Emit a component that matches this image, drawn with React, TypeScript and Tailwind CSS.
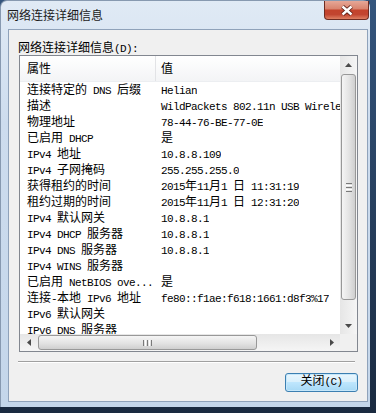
import React from "react";

const CJK_RE = /([\u3000-\u303f\u4e00-\u9fff\uff00-\uffef]+)/;

// SimSun-like mix: CJK glyphs 12px wide, latin half-width 6px
const Txt = ({ text }: { text: string }) => {
  const parts = text.split(CJK_RE);
  return (
    <>
      {parts.map((p, i) =>
        i % 2 === 1 ? (
          <span key={i} className="text-[12px]">
            {p}
          </span>
        ) : p ? (
          <span key={i} className="text-[11px] tracking-[-0.6px]">
            {p}
          </span>
        ) : null
      )}
    </>
  );
};

const rows: [string, string][] = [
  ["连接特定的 DNS 后缀", "Helian"],
  ["描述", "WildPackets 802.11n USB Wireless LAN Card"],
  ["物理地址", "78-44-76-BE-77-0E"],
  ["已启用 DHCP", "是"],
  ["IPv4 地址", "10.8.8.109"],
  ["IPv4 子网掩码", "255.255.255.0"],
  ["获得租约的时间", "2015年11月1 日 11:31:19"],
  ["租约过期的时间", "2015年11月1 日 12:31:20"],
  ["IPv4 默认网关", "10.8.8.1"],
  ["IPv4 DHCP 服务器", "10.8.8.1"],
  ["IPv4 DNS 服务器", "10.8.8.1"],
  ["IPv4 WINS 服务器", ""],
  ["已启用 NetBIOS ove...", "是"],
  ["连接-本地 IPv6 地址", "fe80::f1ae:f618:1661:d8f3%17"],
  ["IPv6 默认网关", ""],
  ["IPv6 DNS 服务器", ""],
];

const Arrow = ({ dir }: { dir: "up" | "down" | "left" | "right" }) => {
  const pts = {
    up: "0,4 3.5,0 7,4",
    down: "0,0 7,0 3.5,4",
    left: "4,0 4,7 0,3.5",
    right: "0,0 4,3.5 0,7",
  }[dir];
  const vertical = dir === "up" || dir === "down";
  return (
    <svg width={vertical ? 7 : 4} height={vertical ? 4 : 7} viewBox={vertical ? "0 0 7 4" : "0 0 4 7"}>
      <polygon points={pts} fill="#4a4a4a" />
    </svg>
  );
};

export default function App() {
  return (
    <div className="w-[376px] h-[413px] overflow-hidden bg-[linear-gradient(to_bottom,#34557d,#1a2a40)] font-['Liberation_Mono','Noto_Sans_CJK_SC',monospace] text-black">
      <div className="w-[370px] h-[407px] rounded-t-[7px] border-l border-t border-[#8799b0] bg-[linear-gradient(to_bottom,#e0eaf5,#cddcee_30%,#c4d6ea)] flex flex-col">
        {/* title bar */}
        <div className="h-[28px] flex items-start">
          <span className="ml-[6px] mt-[5px] text-[12px] leading-[18px] font-['Noto_Sans_CJK_SC',sans-serif] text-[#1b1b1b]">
            网络连接详细信息
          </span>
          <div className="ml-auto mr-[1px] w-[45px] h-[19px] rounded-b-[4px] border border-t-0 border-[#6e2c22] bg-[linear-gradient(to_bottom,#e6a797_0%,#d98570_42%,#c3432c_52%,#c24530_75%,#de7f62_100%)] flex items-center justify-center">
            <svg width="14" height="11" viewBox="0 0 14 11">
              <path d="M2.5 1.5 L11.5 9.5 M11.5 1.5 L2.5 9.5" stroke="#5b1d14" strokeWidth="4.2" />
              <path d="M2.5 1.5 L11.5 9.5 M11.5 1.5 L2.5 9.5" stroke="#ffffff" strokeWidth="2.4" />
            </svg>
          </div>
        </div>

        {/* client area */}
        <div className="ml-[7px] w-[360px] h-[373px] border border-[#8fa2ba] bg-[#f0f0f0] flex flex-col">
          <div className="ml-[9px] mt-[11px] h-[14px] leading-[14px] whitespace-pre">
            <Txt text="网络连接详细信息(D):" />
          </div>

          <div className="ml-[10px] w-[339px] h-[297px] border border-[#828790] bg-white flex flex-col">
            <div className="h-[278px] flex">
              <div className="w-[320px] overflow-hidden">
                <div className="h-[26px] flex leading-[26px] bg-[linear-gradient(to_bottom,#ffffff,#f3f4f6)] border-b border-[#eceef1]">
                  <div className="w-[136px] pl-[7px] border-r border-[#e2e3e6] whitespace-pre">
                    <Txt text="属性" />
                  </div>
                  <div className="pl-[5px] whitespace-pre">
                    <Txt text="值" />
                  </div>
                </div>
                {rows.map(([k, v]) => (
                  <div key={k} className="h-[16px] leading-[16px] flex whitespace-pre">
                    <div className="w-[136px] shrink-0 pl-[7px] overflow-hidden">
                      <Txt text={k} />
                    </div>
                    <div className="pl-[5px] overflow-hidden">
                      <Txt text={v} />
                    </div>
                  </div>
                ))}
              </div>

              {/* vertical scrollbar */}
              <div className="w-[17px] flex flex-col bg-[linear-gradient(to_right,#e6e6e6,#f5f5f5)]">
                <div className="h-[17px] flex items-center justify-center">
                  <Arrow dir="up" />
                </div>
                <div className="mt-[1px] mx-[1px] h-[226px] rounded-[3px] border border-[#989898] bg-[linear-gradient(to_right,#f5f5f5,#e3e3e3_55%,#cfcfcf)] flex flex-col items-center justify-center gap-[1px]">
                  <div className="w-[6px] h-[1px] bg-[#7a7a7a]" />
                  <div className="w-[6px] h-[1px] bg-white" />
                  <div className="w-[6px] h-[1px] bg-[#7a7a7a]" />
                  <div className="w-[6px] h-[1px] bg-white" />
                  <div className="w-[6px] h-[1px] bg-[#7a7a7a]" />
                </div>
                <div className="flex-1" />
                <div className="h-[17px] flex items-center justify-center">
                  <Arrow dir="down" />
                </div>
              </div>
            </div>

            {/* horizontal scrollbar */}
            <div className="h-[17px] flex">
              <div className="w-[320px] flex bg-[linear-gradient(to_bottom,#e6e6e6,#f5f5f5)]">
                <div className="w-[17px] flex items-center justify-center">
                  <Arrow dir="left" />
                </div>
                <div className="ml-[1px] my-[1px] w-[219px] rounded-[3px] border border-[#989898] bg-[linear-gradient(to_bottom,#f5f5f5,#e3e3e3_55%,#cfcfcf)] flex items-center justify-center gap-[1px]">
                  <div className="h-[6px] w-[1px] bg-[#7a7a7a]" />
                  <div className="h-[6px] w-[1px] bg-white" />
                  <div className="h-[6px] w-[1px] bg-[#7a7a7a]" />
                  <div className="h-[6px] w-[1px] bg-white" />
                  <div className="h-[6px] w-[1px] bg-[#7a7a7a]" />
                </div>
                <div className="flex-1" />
                <div className="w-[17px] flex items-center justify-center">
                  <Arrow dir="right" />
                </div>
              </div>
              <div className="w-[17px] bg-[#f0f0f0]" />
            </div>
          </div>

          <div className="ml-[9px] mt-[9px] w-[337px] h-[2px] border-t border-b border-t-[#a0a0a0] border-b-white" />

          <div className="self-end mr-[9px] mt-[10px] w-[73px] h-[19px] rounded-[3px] border border-[#3c7fb1] bg-[linear-gradient(to_bottom,#eaf6fd,#d9f0fc_45%,#bee6fd_50%,#a7d9f5)] shadow-[inset_0_0_0_1px_#c6e7fa] flex items-center justify-center leading-[17px] whitespace-pre">
            <Txt text="关闭(C)" />
          </div>
        </div>
      </div>
    </div>
  );
}
